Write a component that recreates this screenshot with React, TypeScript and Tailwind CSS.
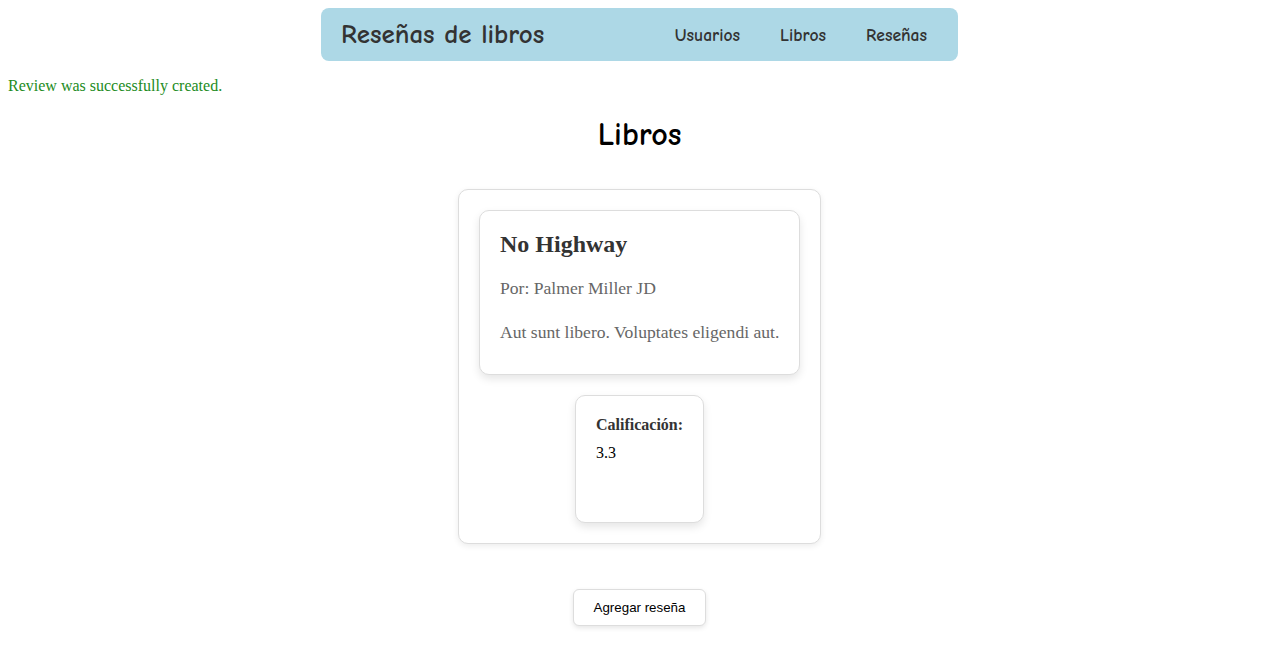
import React from "react";

const comic = "font-['Comic_Neue','Comic_Sans_MS',sans-serif]";

export default function App() {
  return (
    <div className="min-h-[651px] bg-white p-2 font-['Liberation_Serif','Times_New_Roman',serif]">
      <header className="mx-auto flex h-[53px] w-[637px] items-center justify-between rounded-lg bg-[#add8e6] pl-5 pr-[31px]">
        <h1 className={`${comic} text-[27px] font-bold leading-none text-[#333]`}>Reseñas de libros</h1>
        <nav className={`${comic} flex gap-[40px] pt-[2px] text-[17.6px] font-bold text-[#333]`}>
          <a>Usuarios</a>
          <a>Libros</a>
          <a>Reseñas</a>
        </nav>
      </header>
      <p className="mt-[16px] text-[16px] leading-[18px] text-[#228b22]">Review was successfully created.</p>
      <h2 className={`${comic} mt-[21px] text-center text-[32px] font-bold leading-[37px] text-black`}>Libros</h2>
      <div className="mt-[36px] flex justify-center">
        <div className="flex w-[363px] flex-col items-center gap-5 rounded-[10px] border border-[#ddd] bg-white p-5 shadow-[0_2px_6px_rgba(0,0,0,0.08)]">
          <div className="w-[321px] rounded-[10px] border border-[#ddd] bg-white px-5 pt-5 pb-[29px] shadow-[0_4px_8px_rgba(0,0,0,0.1)]">
            <h3 className="text-[24px] font-bold leading-[26px] text-[#333]">No Highway</h3>
            <p className="mt-[18px] whitespace-nowrap text-[17.6px] leading-[26px] text-[#666]">Por: Palmer Miller JD</p>
            <p className="mt-[18px] whitespace-nowrap text-[17.6px] leading-[26px] text-[#666]">Aut sunt libero. Voluptates eligendi aut.</p>
          </div>
          <div className="h-[128px] w-[129px] rounded-[10px] border border-[#ddd] bg-white p-5 shadow-[0_4px_8px_rgba(0,0,0,0.1)]">
            <p className="text-[16px] font-bold leading-[18px] text-[#333]">Calificación:</p>
            <p className="mt-[10px] text-[16px] leading-[18px] text-black">3.3</p>
          </div>
        </div>
      </div>
      <div className="mt-[45px] flex justify-center">
        <button className="h-[37px] w-[133px] rounded-[6px] border border-[#ddd] bg-white font-['Liberation_Sans',Arial,sans-serif] text-[13.33px] text-black shadow-[0_2px_5px_rgba(0,0,0,0.1)]">
          Agregar reseña
        </button>
      </div>
    </div>
  );
}
